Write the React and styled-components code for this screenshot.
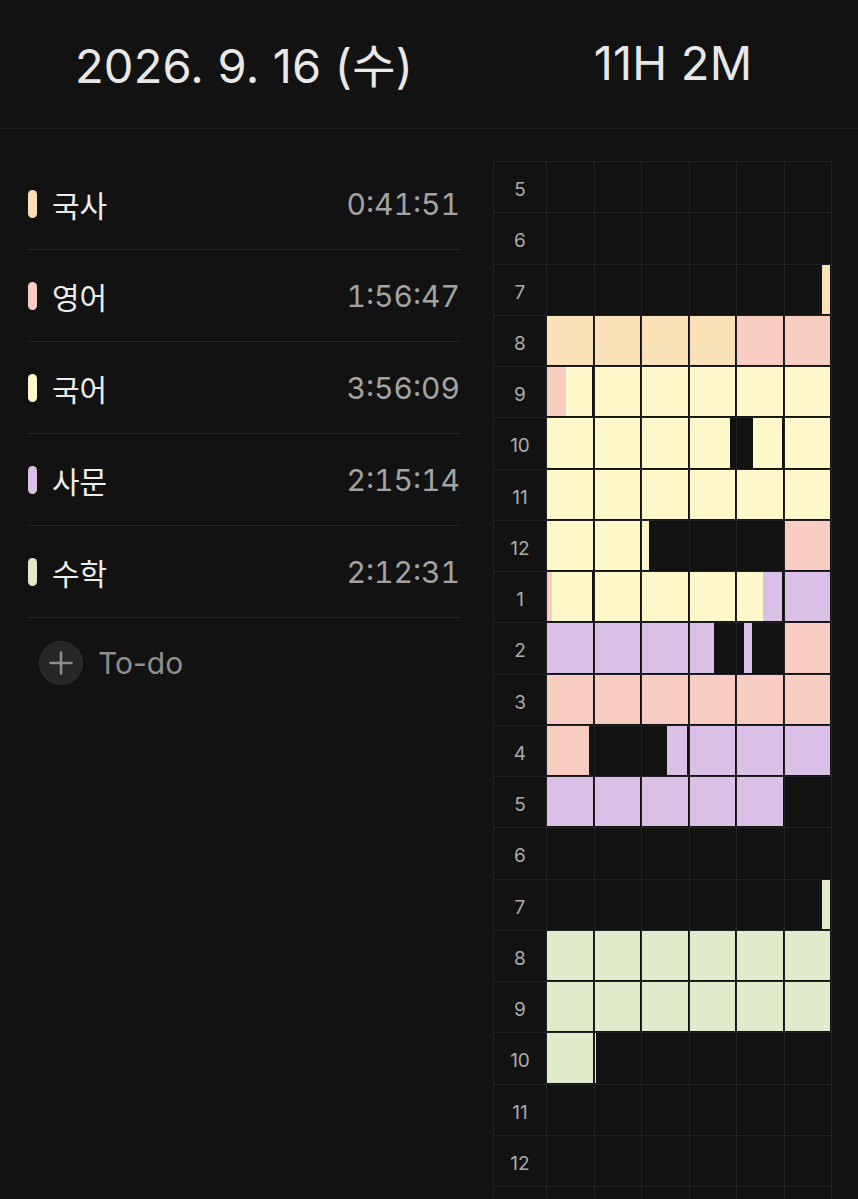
import React from "react";
import styled, { createGlobalStyle } from "styled-components";

const C = {
  peach: "#FBE1B9",
  pink: "#F8CDC1",
  yellow: "#FFF8CA",
  purple: "#DAC0E6",
  green: "#DFEBCB",
};

const Global = createGlobalStyle`
  html, body {
    margin: 0;
    padding: 0;
    background: #121212;
    overflow: hidden;
    height: 100%;
  }
  body {
    font-family: Inter, "Noto Sans CJK KR", "Noto Sans", sans-serif;
    -webkit-font-smoothing: antialiased;
  }
  * { box-sizing: border-box; }
`;

const Page = styled.div`
  width: 858px;
  height: 1199px;
  background: #121212;
  overflow: hidden;
`;

const Header = styled.header`
  display: grid;
  grid-template-columns: 488px 1fr;
  height: 129px;
  border-bottom: 1px solid #222226;
  align-items: center;
`;

const HeaderText = styled.div`
  text-align: center;
  color: #e8e8e8;
  font-size: 47px;
  font-weight: 400;
  letter-spacing: 0.2px;
  padding-bottom: 4px;
`;

const Body = styled.main`
  display: flex;
  align-items: flex-start;
`;

const Left = styled.section`
  width: 493px;
  padding: 29px 33px 0 28px;
`;

const SubjectRow = styled.div`
  display: flex;
  align-items: center;
  height: 92px;
  border-bottom: 1px solid #222227;
`;

const Bar = styled.span`
  width: 9px;
  height: 28px;
  border-radius: 4.5px;
  background: ${(p) => p.$color};
  margin-right: 15px;
  flex: none;
`;

const SubjectName = styled.span`
  color: #ececec;
  font-size: 30px;
  flex: 1;
`;

const SubjectTime = styled.span`
  color: #a3a3a3;
  font-size: 30px;
  font-variant-numeric: tabular-nums;
`;

const TodoRow = styled.div`
  display: flex;
  align-items: center;
  height: 90px;
  padding-left: 11px;
`;

const PlusCircle = styled.span`
  width: 44px;
  height: 44px;
  border-radius: 50%;
  background: #262626;
  border: 1px solid #303030;
  display: flex;
  align-items: center;
  justify-content: center;
  margin-right: 15px;
`;

const TodoText = styled.span`
  color: #8e8e8e;
  font-size: 30px;
`;

const Right = styled.section`
  padding-top: 32px;
`;

const Grid = styled.div`
  width: 339px;
  display: grid;
  grid-template-columns: 53px repeat(6, 1fr);
  grid-auto-rows: 51.25px;
  border-left: 1px solid #222226;
  border-top: 1px solid #222226;
`;

const Cell = styled.div`
  border-right: 1px solid #222226;
  border-bottom: 1px solid #222226;
  display: flex;
`;

const Label = styled(Cell)`
  align-items: center;
  justify-content: center;
  color: #ababab;
  font-size: 19px;
  padding-top: 5px;
`;

const Track = styled.div`
  flex: 1;
  display: flex;
  margin: 0 1px 1px 0;
`;

const Piece = styled.div`
  height: 100%;
  background: ${(p) => p.$color || "transparent"};
`;

const SUBJECTS = [
  { name: "국사", time: "0:41:51", color: C.peach },
  { name: "영어", time: "1:56:47", color: C.pink },
  { name: "국어", time: "3:56:09", color: C.yellow },
  { name: "사문", time: "2:15:14", color: C.purple },
  { name: "수학", time: "2:12:31", color: C.green },
];

const ROWS = [
  { label: 5, segs: [] },
  { label: 6, segs: [] },
  { label: 7, segs: [[58.2, 60, C.peach]] },
  { label: 8, segs: [[0, 40, C.peach], [40, 60, C.pink]] },
  { label: 9, segs: [[0, 4.2, C.pink], [4.2, 60, C.yellow]] },
  { label: 10, segs: [[0, 38.8, C.yellow], [43.6, 60, C.yellow]] },
  { label: 11, segs: [[0, 60, C.yellow]] },
  { label: 12, segs: [[0, 21.6, C.yellow], [50, 60, C.pink]] },
  { label: 1, segs: [[0, 1.1, C.pink], [1.1, 45.7, C.yellow], [45.7, 60, C.purple]] },
  { label: 2, segs: [[0, 35.4, C.purple], [41.6, 43.3, C.purple], [50, 60, C.pink]] },
  { label: 3, segs: [[0, 60, C.pink]] },
  { label: 4, segs: [[0, 9.3, C.pink], [25.5, 60, C.purple]] },
  { label: 5, segs: [[0, 50, C.purple]] },
  { label: 6, segs: [] },
  { label: 7, segs: [[58.2, 60, C.green]] },
  { label: 8, segs: [[0, 60, C.green]] },
  { label: 9, segs: [[0, 60, C.green]] },
  { label: 10, segs: [[0, 10.3, C.green]] },
  { label: 11, segs: [] },
  { label: 12, segs: [] },
  { label: "", segs: [] },
];

function piecesFor(segs, col) {
  const a = col * 10;
  const b = a + 10;
  const parts = [];
  let cur = a;
  segs
    .filter(([s, e]) => e > a && s < b)
    .forEach(([s, e, color]) => {
      const ss = Math.max(s, a);
      const ee = Math.min(e, b);
      if (ss > cur) parts.push({ w: ss - cur, color: null });
      parts.push({ w: ee - ss, color });
      cur = ee;
    });
  if (cur < b) parts.push({ w: b - cur, color: null });
  return parts;
}

const PlusIcon = () => (
  <svg width="26" height="26" viewBox="0 0 26 26">
    <path d="M13 2.5v21M2.5 13h21" stroke="#8c8c8c" strokeWidth="2.6" strokeLinecap="round" />
  </svg>
);

export default function App() {
  return (
    <Page>
      <Global />
      <Header>
        <HeaderText>2026. 9. 16 (수)</HeaderText>
        <HeaderText>11H 2M</HeaderText>
      </Header>
      <Body>
        <Left>
          {SUBJECTS.map((s) => (
            <SubjectRow key={s.name}>
              <Bar $color={s.color} />
              <SubjectName>{s.name}</SubjectName>
              <SubjectTime>{s.time}</SubjectTime>
            </SubjectRow>
          ))}
          <TodoRow>
            <PlusCircle>
              <PlusIcon />
            </PlusCircle>
            <TodoText>To-do</TodoText>
          </TodoRow>
        </Left>
        <Right>
          <Grid>
            {ROWS.map((r, i) => (
              <React.Fragment key={i}>
                <Label>{r.label}</Label>
                {[0, 1, 2, 3, 4, 5].map((c) => (
                  <Cell key={c}>
                    <Track>
                      {piecesFor(r.segs, c).map((p, k) => (
                        <Piece key={k} $color={p.color} style={{ width: `${p.w * 10}%` }} />
                      ))}
                    </Track>
                  </Cell>
                ))}
              </React.Fragment>
            ))}
          </Grid>
        </Right>
      </Body>
    </Page>
  );
}
